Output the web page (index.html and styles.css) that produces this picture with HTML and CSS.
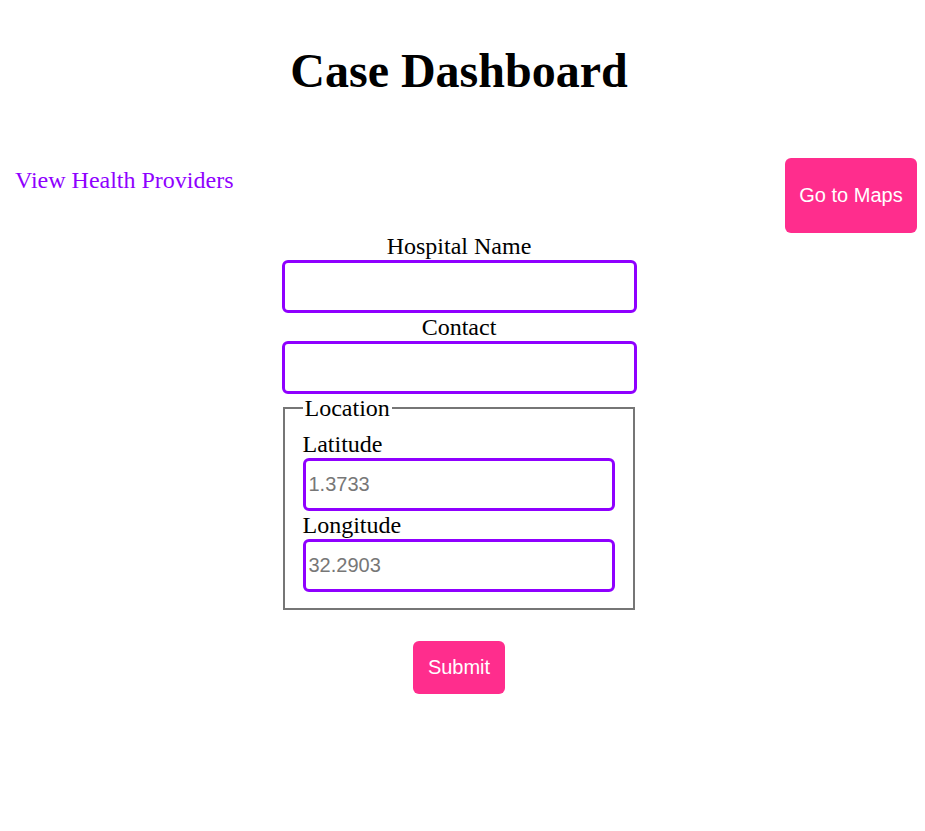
FILE: index.html
```html
<!DOCTYPE html>
<html lang="en">
<head>
<meta charset="utf-8">
<title>Case Dashboard</title>
<link rel="stylesheet" href="styles.css">
</head>
<body>
<div class="page">
  <h1 class="title">Case Dashboard</h1>
  <div class="toolbar">
    <a class="link" href="#">View Health Providers</a>
    <button class="btn btn-maps" type="button">Go to Maps</button>
  </div>
  <form class="form">
    <label class="label label-center" for="hname">Hospital Name</label>
    <input class="field" id="hname" type="text">
    <label class="label label-center" for="contact">Contact</label>
    <input class="field" id="contact" type="text">
    <fieldset class="location">
      <legend class="legend">Location</legend>
      <label class="label" for="lat">Latitude</label>
      <input class="field" id="lat" type="text" placeholder="1.3733">
      <label class="label" for="lng">Longitude</label>
      <input class="field" id="lng" type="text" placeholder="32.2903">
    </fieldset>
    <div class="actions">
      <button class="btn btn-submit" type="submit">Submit</button>
    </div>
  </form>
</div>
</body>
</html>
```
FILE: styles.css
```css
html, body {
  margin: 0;
  padding: 0;
  background: #ffffff;
}
body {
  padding: 8px;
  font-family: "Liberation Serif", "Times New Roman", serif;
  color: #000;
}
.page {
  display: flex;
  flex-direction: column;
}
.title {
  font-size: 48px;
  font-weight: bold;
  text-align: center;
  margin: 35px 7px 0 0;
  line-height: 55px;
}
.toolbar {
  display: flex;
  justify-content: space-between;
  align-items: flex-start;
  margin-top: 60px;
}
.link {
  font-size: 24px;
  color: #8f00ff;
  text-decoration: none;
  margin: 9px 0 0 7px;
  line-height: 27px;
}
.btn {
  font-family: "Liberation Sans", Arial, sans-serif;
  font-size: 20px;
  color: #ffffff;
  background: #ff2d8d;
  border: none;
  border-radius: 6px;
  cursor: pointer;
  line-height: 23px;
}
.btn-maps {
  width: 132px;
  height: 75px;
  padding: 0;
}
.form {
  width: 355px;
  align-self: center;
  margin: -1px 7px 0 0;
  display: flex;
  flex-direction: column;
}
.label {
  font-size: 24px;
  line-height: 28px;
  display: block;
}
.label-center {
  text-align: center;
}
.field {
  box-sizing: border-box;
  width: 100%;
  height: 53px;
  border: 3px solid #8f00ff;
  border-radius: 6px;
  font-family: "Liberation Sans", Arial, sans-serif;
  font-size: 20px;
  padding: 0 3px;
  margin: 0;
  background: #fff;
  outline: none;
}
.field::placeholder {
  color: #777777;
}
.location {
  margin: 0 2px 0 1px;
  border: 2px solid #767676;
  font-size: 24px;
  padding: 8px 18px 16px 18px;
  display: flex;
  flex-direction: column;
}
.legend {
  padding: 0 2px;
  line-height: 28px;
}
.actions {
  display: flex;
  justify-content: center;
  margin-top: 31px;
}
.btn-submit {
  width: 92px;
  height: 53px;
  padding: 0;
}
```
